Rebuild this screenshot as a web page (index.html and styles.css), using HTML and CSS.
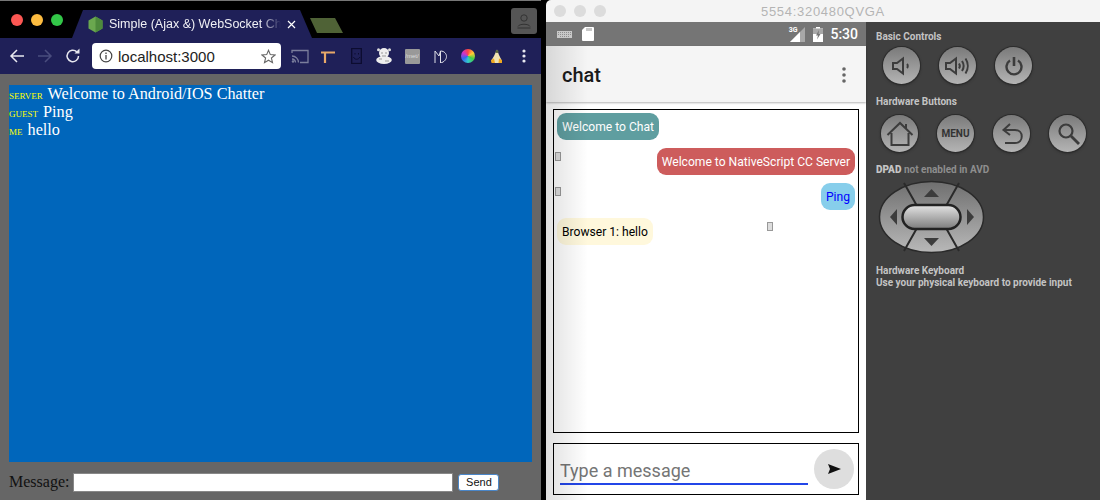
FILE: index.html
```html
<!DOCTYPE html>
<html lang="en">
<head>
  <meta charset="UTF-8">
  <title>Simple (Ajax &amp;) WebSocket Chatter</title>
  <link rel="stylesheet" href="styles.css">
</head>
<body>
  <div class="browser">
    <div class="tabstrip">
      <div class="lights">
        <span class="light red"></span>
        <span class="light yellow"></span>
        <span class="light green"></span>
      </div>
      <div class="tab">
        <svg class="favicon" width="15" height="17" viewBox="0 0 15 17"><path d="M7.5 0.5 14.5 4.5V12.5L7.5 16.5 0.5 12.5V4.5Z" fill="#6aa84f"/><path d="M7.5 0.5 14.5 4.5V12.5L7.5 16.5Z" fill="#4d8a3c"/></svg>
        <span class="tab-title">Simple (Ajax &amp;) WebSocket Ch</span>
        <svg class="tab-close" width="9" height="9" viewBox="0 0 9 9"><path d="M1 1 8 8M8 1 1 8" stroke="#fff" stroke-width="1.2"/></svg>
      </div>
      <div class="tab-new"></div>
      <div class="profile">
        <svg width="16" height="16" viewBox="0 0 16 16"><circle cx="8" cy="5" r="3.2" fill="none" stroke="#333" stroke-width="1"/><path d="M2 13.5C3 10.5 13 10.5 14 13.5M1.5 15H14.5" fill="none" stroke="#333" stroke-width="1"/></svg>
      </div>
    </div>
    <div class="toolbar">
      <div class="nav">
        <svg width="16" height="16" viewBox="0 0 16 16"><path d="M15 8H2M8 2 2 8 8 14" fill="none" stroke="#e8e8f0" stroke-width="1.5"/></svg>
        <svg width="16" height="16" viewBox="0 0 16 16"><path d="M1 8H14M8 2 14 8 8 14" fill="none" stroke="#4a4d7e" stroke-width="1.5"/></svg>
        <svg width="16" height="16" viewBox="0 0 16 16"><path d="M13.5 8A5.7 5.7 0 1 1 11.8 3.9" fill="none" stroke="#e8e8f0" stroke-width="1.5"/><path d="M9.5 5.5H14.5V0.5Z" fill="#e8e8f0"/></svg>
      </div>
      <div class="omnibox">
        <svg width="14" height="14" viewBox="0 0 14 14"><circle cx="7" cy="7" r="5.8" fill="none" stroke="#444" stroke-width="1.2"/><path d="M7 6V10.5M7 3.5V5" stroke="#444" stroke-width="1.3"/></svg>
        <span class="url">localhost:3000</span>
        <svg class="star" width="15" height="15" viewBox="0 0 15 15"><path d="M7.5 1.3 9.3 5.6 14 6 10.4 9 11.5 13.6 7.5 11.2 3.5 13.6 4.6 9 1 6 5.7 5.6Z" fill="none" stroke="#666" stroke-width="1.1"/></svg>
      </div>
      <div class="extensions">
        <svg width="18" height="15" viewBox="0 0 18 15"><path d="M1 4V1.5H17V13.5H9" fill="none" stroke="#7b7e9c" stroke-width="1.3"/><path d="M1 7A6.5 6.5 0 0 1 7.5 13.5M1 10A3.5 3.5 0 0 1 4.5 13.5" fill="none" stroke="#7b7e9c" stroke-width="1.3"/><circle cx="2" cy="12.5" r="1.2" fill="#7b7e9c"/></svg>
        <svg width="14" height="13" viewBox="0 0 14 13"><path d="M0 2.500H14M4 2.500V13" fill="none" stroke="#e8a869" stroke-width="2.200"/></svg>
        <svg width="11" height="16" viewBox="0 0 11 16"><rect x="0.700" y="0.500" width="9.600" height="15" fill="none" stroke="#0c0c30" stroke-width="1.300"/><path d="M2.500 9C3.500 12 7.500 12 9 9M4 5V6.500M7.500 5V6.500" fill="none" stroke="#0c0c30" stroke-width="1"/></svg>
        <svg width="16" height="16" viewBox="0 0 16 16"><circle cx="8" cy="5" r="5" fill="#eee"/><circle cx="2.500" cy="1.800" r="1.500" fill="#ddd"/><circle cx="13.500" cy="1.800" r="1.500" fill="#ddd"/><ellipse cx="8" cy="12" rx="7.800" ry="4" fill="#eee"/><path d="M5 5H7M9 5H11M3 11H6M9 13H13M6 8H10" stroke="#999" stroke-width="1"/></svg>
        <span class="ext-box">/met/</span>
        <svg width="13" height="13" viewBox="0 0 13 13"><path d="M1 13V1L5 6 6.500 1V13M6.500 1C10.500 1 12.500 4 12.500 6.500S10.500 12 6.500 13" fill="none" stroke="#e0e0e8" stroke-width="1"/></svg>
        <span class="ext-wheel"></span>
        <svg width="13" height="15" viewBox="0 0 13 15"><path d="M7 0.500 9 6 12 12 9.500 14H3.500L1 12 4 7Z" fill="#f0e2b0"/><path d="M1 11 4 9.500 5 14H1.500ZM12 11 9 9.500 8.500 14H12Z" fill="#f0a820"/><circle cx="7" cy="2.500" r="1.500" fill="#56663a"/></svg>
        <svg width="4" height="14" viewBox="0 0 4 14"><circle cx="2" cy="2" r="1.600" fill="#e8e8f0"/><circle cx="2" cy="7" r="1.600" fill="#e8e8f0"/><circle cx="2" cy="12" r="1.600" fill="#e8e8f0"/></svg>
      </div>
    </div>
    <div class="page">
      <div class="log">
        <div class="log-line"><span class="sender">server</span> Welcome to Android/IOS Chatter</div>
        <div class="log-line"><span class="sender">guest</span> Ping</div>
        <div class="log-line"><span class="sender">me</span> hello</div>
      </div>
      <form class="send-form">
        <label class="send-label">Message:</label>
        <input class="send-input" type="text">
        <button class="send-btn" type="button">Send</button>
      </form>
    </div>
  </div>

  <div class="emulator">
    <div class="titlebar">
      <div class="dots"><span></span><span></span><span></span></div>
      <span class="titlebar-text">5554:320480QVGA</span>
    </div>
    <div class="emu-body">
      <div class="screen">
        <div class="statusbar">
          <svg width="15" height="7" viewBox="0 0 15 7"><rect width="15" height="7" fill="#c8c8c8"/><path d="M1 1.500H14M1 3.500H14M3 5.500H12" stroke="#757575" stroke-width="0.7" stroke-dasharray="1 1"/></svg>
          <svg class="sd" width="12" height="14" viewBox="0 0 12 14"><path d="M3 0H11A1 1 0 0 1 12 1V13A1 1 0 0 1 11 14H1A1 1 0 0 1 0 13V3Z" fill="#fff"/><path d="M5 1V4M7 1V4M9 1V4" stroke="#757575" stroke-width="0.8"/></svg>
          <span class="net">3G</span>
          <svg width="15" height="15" viewBox="0 0 15 15"><path d="M15 0V15H0Z" fill="#a8a8a8"/><path d="M10 5V15H0Z" fill="#fff"/></svg>
          <svg class="batt" width="10" height="15" viewBox="0 0 10 15"><path d="M3 0H7V1.500H10V15H0V1.500H3Z" fill="#fff"/><path d="M0 1.500H10V7H0Z" fill="#a8a8a8"/><path d="M6 3 3 8.500H5L4 12.500 7.500 7H5.500Z" fill="#757575"/></svg>
          <span class="clock">5:30</span>
        </div>
        <div class="appbar">
          <span class="app-title">chat</span>
          <svg width="4" height="16" viewBox="0 0 4 16"><circle cx="2" cy="2" r="1.800" fill="#666"/><circle cx="2" cy="8" r="1.800" fill="#666"/><circle cx="2" cy="14" r="1.800" fill="#666"/></svg>
        </div>
        <div class="content">
          <div class="chatbox">
            <div class="row"><span class="bubble teal">Welcome to Chat</span></div>
            <div class="row row-split"><span class="nochar"></span><span class="bubble red-bubble">Welcome to NativeScript CC Server</span></div>
            <div class="row row-split"><span class="nochar"></span><span class="bubble sky">Ping</span></div>
            <div class="row row-gap"><span class="bubble cream">Browser 1: hello</span><span class="nochar"></span></div>
          </div>
          <div class="composer">
            <div class="composer-field">Type a message</div>
            <div class="composer-send">
              <svg width="13" height="10" viewBox="0 0 13 10"><path d="M0 0 13 5 0 10 2 5Z" fill="#111"/></svg>
            </div>
          </div>
        </div>
        <div class="edge-shade"></div>
      </div>
      <aside class="controls">
        <h2 class="ctl-title">Basic Controls</h2>
        <div class="ctl-row">
          <div class="round">
            <svg width="22" height="22" viewBox="0 0 22 22"><path d="M2 8H6L12 3.500V18.500L6 14H2Z" fill="none" stroke="#3c3c3c" stroke-width="2"/><path d="M16 9C17 10 17 12 16 13" fill="none" stroke="#3c3c3c" stroke-width="2"/></svg>
          </div>
          <div class="round">
            <svg width="26" height="22" viewBox="0 0 26 22"><path d="M1 8H5L11 3.500V18.500L5 14H1Z" fill="none" stroke="#3c3c3c" stroke-width="2"/><path d="M14 8.500C15 10 15 12 14 13.500M17 6C19 9 19 13 17 16M20.500 3.500C23.500 8 23.500 14 20.500 18.500" fill="none" stroke="#3c3c3c" stroke-width="2"/></svg>
          </div>
          <div class="round">
            <svg width="20" height="20" viewBox="0 0 20 20"><path d="M6 4.500A7.500 7.500 0 1 0 14 4.500" fill="none" stroke="#3c3c3c" stroke-width="2.400"/><path d="M10 1V10" stroke="#3c3c3c" stroke-width="2.600"/></svg>
          </div>
        </div>
        <h2 class="ctl-title ctl-title-hw">Hardware Buttons</h2>
        <div class="ctl-row ctl-row-hw">
          <div class="round">
            <svg width="28" height="26" viewBox="0 0 28 26"><path d="M1.500 14 14 2 26.500 14M5.500 12V24H22.500V12M20 3V8" fill="none" stroke="#3c3c3c" stroke-width="2"/></svg>
          </div>
          <div class="round"><span class="menu-label">MENU</span></div>
          <div class="round">
            <svg width="24" height="24" viewBox="0 0 24 24"><path d="M10 2 3.500 8 10 13M4 8H15C24 8 24 21 15 21H5" fill="none" stroke="#3c3c3c" stroke-width="2"/></svg>
          </div>
          <div class="round">
            <svg width="24" height="24" viewBox="0 0 24 24"><circle cx="10" cy="9" r="6.500" fill="none" stroke="#3c3c3c" stroke-width="2.200"/><path d="M15 14 23 22" stroke="#3c3c3c" stroke-width="2.800"/></svg>
          </div>
        </div>
        <p class="dpad-note"><b>DPAD</b> not enabled in AVD</p>
        <svg class="dpad" width="107" height="74" viewBox="0 0 107 74">
          <defs>
            <linearGradient id="dpadFill" x1="0" y1="0" x2="0" y2="1"><stop offset="0" stop-color="#6f6f6f"/><stop offset="1" stop-color="#b8b8b8"/></linearGradient>
            <linearGradient id="pillFill" x1="0" y1="0" x2="0" y2="1"><stop offset="0" stop-color="#e4e4e4"/><stop offset="1" stop-color="#7c7c7c"/></linearGradient>
          </defs>
          <ellipse cx="53.500" cy="37" rx="52" ry="35.500" fill="url(#dpadFill)" stroke="#2a2a2a" stroke-width="1.500"/>
          <path d="M26 3 39 26M81 3 68 26M26 71 39 48M81 71 68 48" stroke="#2a2a2a" stroke-width="2"/>
          <rect x="24.500" y="25" width="58" height="24" rx="12" fill="url(#pillFill)" stroke="#222" stroke-width="2.500"/>
          <path d="M53.500 9 61 17H46ZM53.500 66 46 58H61ZM12 37 19 29V45ZM96 37 89 29V45Z" fill="#3c3c3c"/>
        </svg>
        <h2 class="ctl-title ctl-title-kb">Hardware Keyboard</h2>
        <p class="ctl-hint">Use your physical keyboard to provide input</p>
      </aside>
    </div>
  </div>
</body>
</html>
```

FILE: styles.css
```css
html, body {
  margin: 0;
  height: 100%;
  overflow: hidden;
}

body {
  display: flex;
  background: #000;
  font-family: "Liberation Serif", serif;
}

/* left: chrome window */
.browser {
  width: 541px;
  margin-right: 5px;
  flex-shrink: 0;
  display: flex;
  flex-direction: column;
  height: 500px;
}

.tabstrip {
  height: 38px;
  box-sizing: border-box;
  border-top: 1px solid #777;
  background: #000;
  display: flex;
  align-items: flex-end;
  position: relative;
}

.lights {
  display: flex;
  gap: 8px;
  padding: 0 0 12px 11px;
  width: 61px;
}

.light {
  width: 12px;
  height: 12px;
  border-radius: 50%;
}

.red { background: #fc5753; }
.yellow { background: #fdbc40; }
.green { background: #33c748; }

.tab {
  width: 240px;
  height: 28px;
  background: #1f2058;
  clip-path: polygon(11px 0, 228px 0, 100% 100%, 0 100%);
  display: flex;
  align-items: center;
  padding-left: 16px;
  box-sizing: border-box;
  font-family: "Liberation Sans", sans-serif;
  font-size: 12.500px;
  color: #f0f0f5;
}

.favicon { flex-shrink: 0; }

.tab-title {
  margin-left: 6px;
  width: 172px;
  white-space: nowrap;
  -webkit-mask-image: linear-gradient(to right, #000 88%, transparent);
  mask-image: linear-gradient(to right, #000 88%, transparent);
}

.tab-close { margin-left: 6px; }

.tab-new {
  width: 33px;
  height: 15px;
  margin: 0 0 5px -2px;
  background: #4f6236;
  clip-path: polygon(0 0, 25px 0, 100% 100%, 7px 100%);
}

.profile {
  margin: 0 4px 4px auto;
  width: 26px;
  height: 26px;
  background: #555;
  border-radius: 3px;
  display: flex;
  align-items: center;
  justify-content: center;
}

.toolbar {
  height: 36px;
  background: #1f2058;
  display: flex;
  align-items: center;
}

.nav {
  display: flex;
  gap: 12px;
  padding-left: 9px;
  width: 83px;
}

.omnibox {
  width: 189px;
  height: 26px;
  background: #fff;
  border-radius: 4px;
  display: flex;
  align-items: center;
  box-sizing: border-box;
  padding: 0 5px 0 7px;
  font-family: "Liberation Sans", sans-serif;
  font-size: 15px;
  color: #222;
}

.url { margin-left: 5px; }
.star { margin-left: auto; }

.extensions {
  display: grid;
  grid-auto-flow: column;
  grid-auto-columns: 28px;
  justify-items: center;
  align-items: center;
  padding-left: 5px;
}

.ext-box {
  width: 15px;
  height: 15px;
  background: #999;
  border-radius: 1px;
  color: #ddd;
  font: 6px/15px "Liberation Sans", sans-serif;
  text-align: center;
}

.ext-wheel {
  width: 14px;
  height: 14px;
  border-radius: 50%;
  background: conic-gradient(#f44, #fc3, #4c4, #3cc, #36e, #c3c, #f44);
}

.page {
  flex: 1;
  background: #666;
  padding: 11px 9px 0;
}

.log {
  height: 377px;
  background: #0066bb;
  color: #fff;
  font-size: 16.200px;
}

.log-line {
  height: 18px;
  line-height: 18px;
}

.sender {
  color: #ff0;
  font-size: 13px;
  line-height: 1;
  font-variant: small-caps;
  margin-right: 1px;
}

.send-form {
  display: flex;
  align-items: center;
  height: 20px;
  margin-top: 10px;
  font-size: 16px;
  color: #111;
}

.send-label { margin-right: 4px; }

.send-input {
  width: 380px;
  height: 19px;
  box-sizing: border-box;
  border: 1px solid #888;
  background: #fff;
  padding: 0;
}

.send-btn {
  width: 41px;
  height: 17px;
  margin-left: 5px;
  padding: 0;
  background: #fff;
  border: 1px solid #4a86c8;
  border-radius: 3px;
  font: 11px "Liberation Sans", sans-serif;
  color: #111;
}

/* right: emulator window */
.emulator {
  flex: 1;
  display: flex;
  flex-direction: column;
  min-width: 0;
}

.titlebar {
  height: 22px;
  background: #f4f4f4;
  border-radius: 5px 0 0 0;
  display: flex;
  align-items: center;
  position: relative;
}

.dots {
  display: flex;
  gap: 8px;
  padding-left: 8px;
}

.dots span {
  width: 12px;
  height: 12px;
  border-radius: 50%;
  background: #dcdcdc;
}

.titlebar-text {
  margin-left: 155px;
  font: 13px "Liberation Sans", sans-serif;
  letter-spacing: 0.700px;
  color: #b4b4b4;
}

.emu-body {
  flex: 1;
  display: flex;
}

.screen {
  width: 320px;
  display: flex;
  flex-direction: column;
  position: relative;
  background: #fff;
  font-family: Roboto, sans-serif;
}

.edge-shade {
  position: absolute;
  top: 24px;
  left: 0;
  bottom: 0;
  width: 42px;
  background: linear-gradient(to right, rgba(0,0,0,0.12), rgba(0,0,0,0));
  pointer-events: none;
}

.statusbar {
  height: 24px;
  background: #757575;
  display: flex;
  align-items: center;
  padding: 0 8px 0 11px;
  color: #fff;
}

.sd { margin-left: 10px; }

.net {
  margin-left: auto;
  font-size: 7px;
  font-weight: 700;
  margin-right: -7px;
  margin-top: -8px;
}

.batt { margin-left: 8px; }

.clock {
  margin-left: 7px;
  font-size: 14px;
  font-weight: 500;
}

.appbar {
  height: 56px;
  box-sizing: border-box;
  padding: 2px 20px 0 16px;
  background: #f5f5f5;
  box-shadow: 0 1px 2px rgba(0,0,0,0.3);
  display: flex;
  align-items: center;
  justify-content: space-between;
  font-size: 20px;
  font-weight: 500;
  color: #1a1a1a;
}

.content {
  flex: 1;
  display: flex;
  flex-direction: column;
  padding: 7px 7px 5px;
  gap: 10px;
}

.chatbox {
  flex: 1;
  border: 1px solid #000;
  padding: 3px;
  display: flex;
  flex-direction: column;
  gap: 8px;
}

.row { display: flex; }
.row-split { justify-content: space-between; }
.row-gap { gap: 116px; }

.bubble {
  height: 27px;
  line-height: 28px;
  padding: 0 5px;
  border-radius: 9px;
  font-size: 12.100px;
  white-space: nowrap;
}

.teal { background: #5f9ea0; color: #fff; }
.red-bubble { background: #cd5c5c; color: #fff; }
.sky { background: #87ceeb; color: #00f; }
.cream { background: #fff8dc; color: #000; }

.nochar {
  width: 4px;
  height: 7px;
  margin: 4px 1px 0 -2px;
  border: 1px solid #999;
  background: #ddd;
}

.composer {
  height: 52px;
  box-sizing: border-box;
  border: 1px solid #000;
  display: flex;
  align-items: center;
  padding: 0 4px 0 6px;
}

.composer-field {
  width: 248px;
  height: 24px;
  margin-top: 5px;
  border-bottom: 2px solid #2346e8;
  font-size: 18px;
  line-height: 24px;
  color: #757575;
}

.composer-send {
  width: 40px;
  height: 40px;
  margin-left: 6px;
  border-radius: 50%;
  background: #dedede;
  display: flex;
  align-items: center;
  justify-content: center;
}

.controls {
  flex: 1;
  background: #404040;
  padding: 9px 0 0 10px;
  font-family: Roboto, sans-serif;
  color: #c4c4c4;
  font-size: 10px;
  font-weight: 700;
}

.ctl-title {
  margin: 0;
  font-size: 10px;
  line-height: 12px;
  font-weight: 700;
}

.ctl-title-hw { margin-top: 12px; }

.ctl-row {
  display: flex;
  gap: 19px;
  margin-top: 4px;
  padding-left: 7px;
}

.ctl-row-hw {
  padding-left: 5px;
  margin-top: 7px;
}

.round {
  width: 37px;
  height: 37px;
  border-radius: 50%;
  background: linear-gradient(#7a7a7a, #b4b4b4);
  box-shadow: 0 0 0 1px #2c2c2c, 0 1px 3px #222;
  display: flex;
  align-items: center;
  justify-content: center;
}

.menu-label {
  font-size: 10px;
  font-weight: 700;
  color: #333;
}

.dpad-note {
  margin: 12px 0 0;
  line-height: 12px;
  color: #8e8e8e;
}

.dpad-note b { color: #c4c4c4; }

.dpad {
  display: block;
  margin: 4px 0 0 2px;
}

.ctl-title-kb { margin-top: 11px; }

.ctl-hint {
  margin: 0;
  line-height: 12px;
}
```
